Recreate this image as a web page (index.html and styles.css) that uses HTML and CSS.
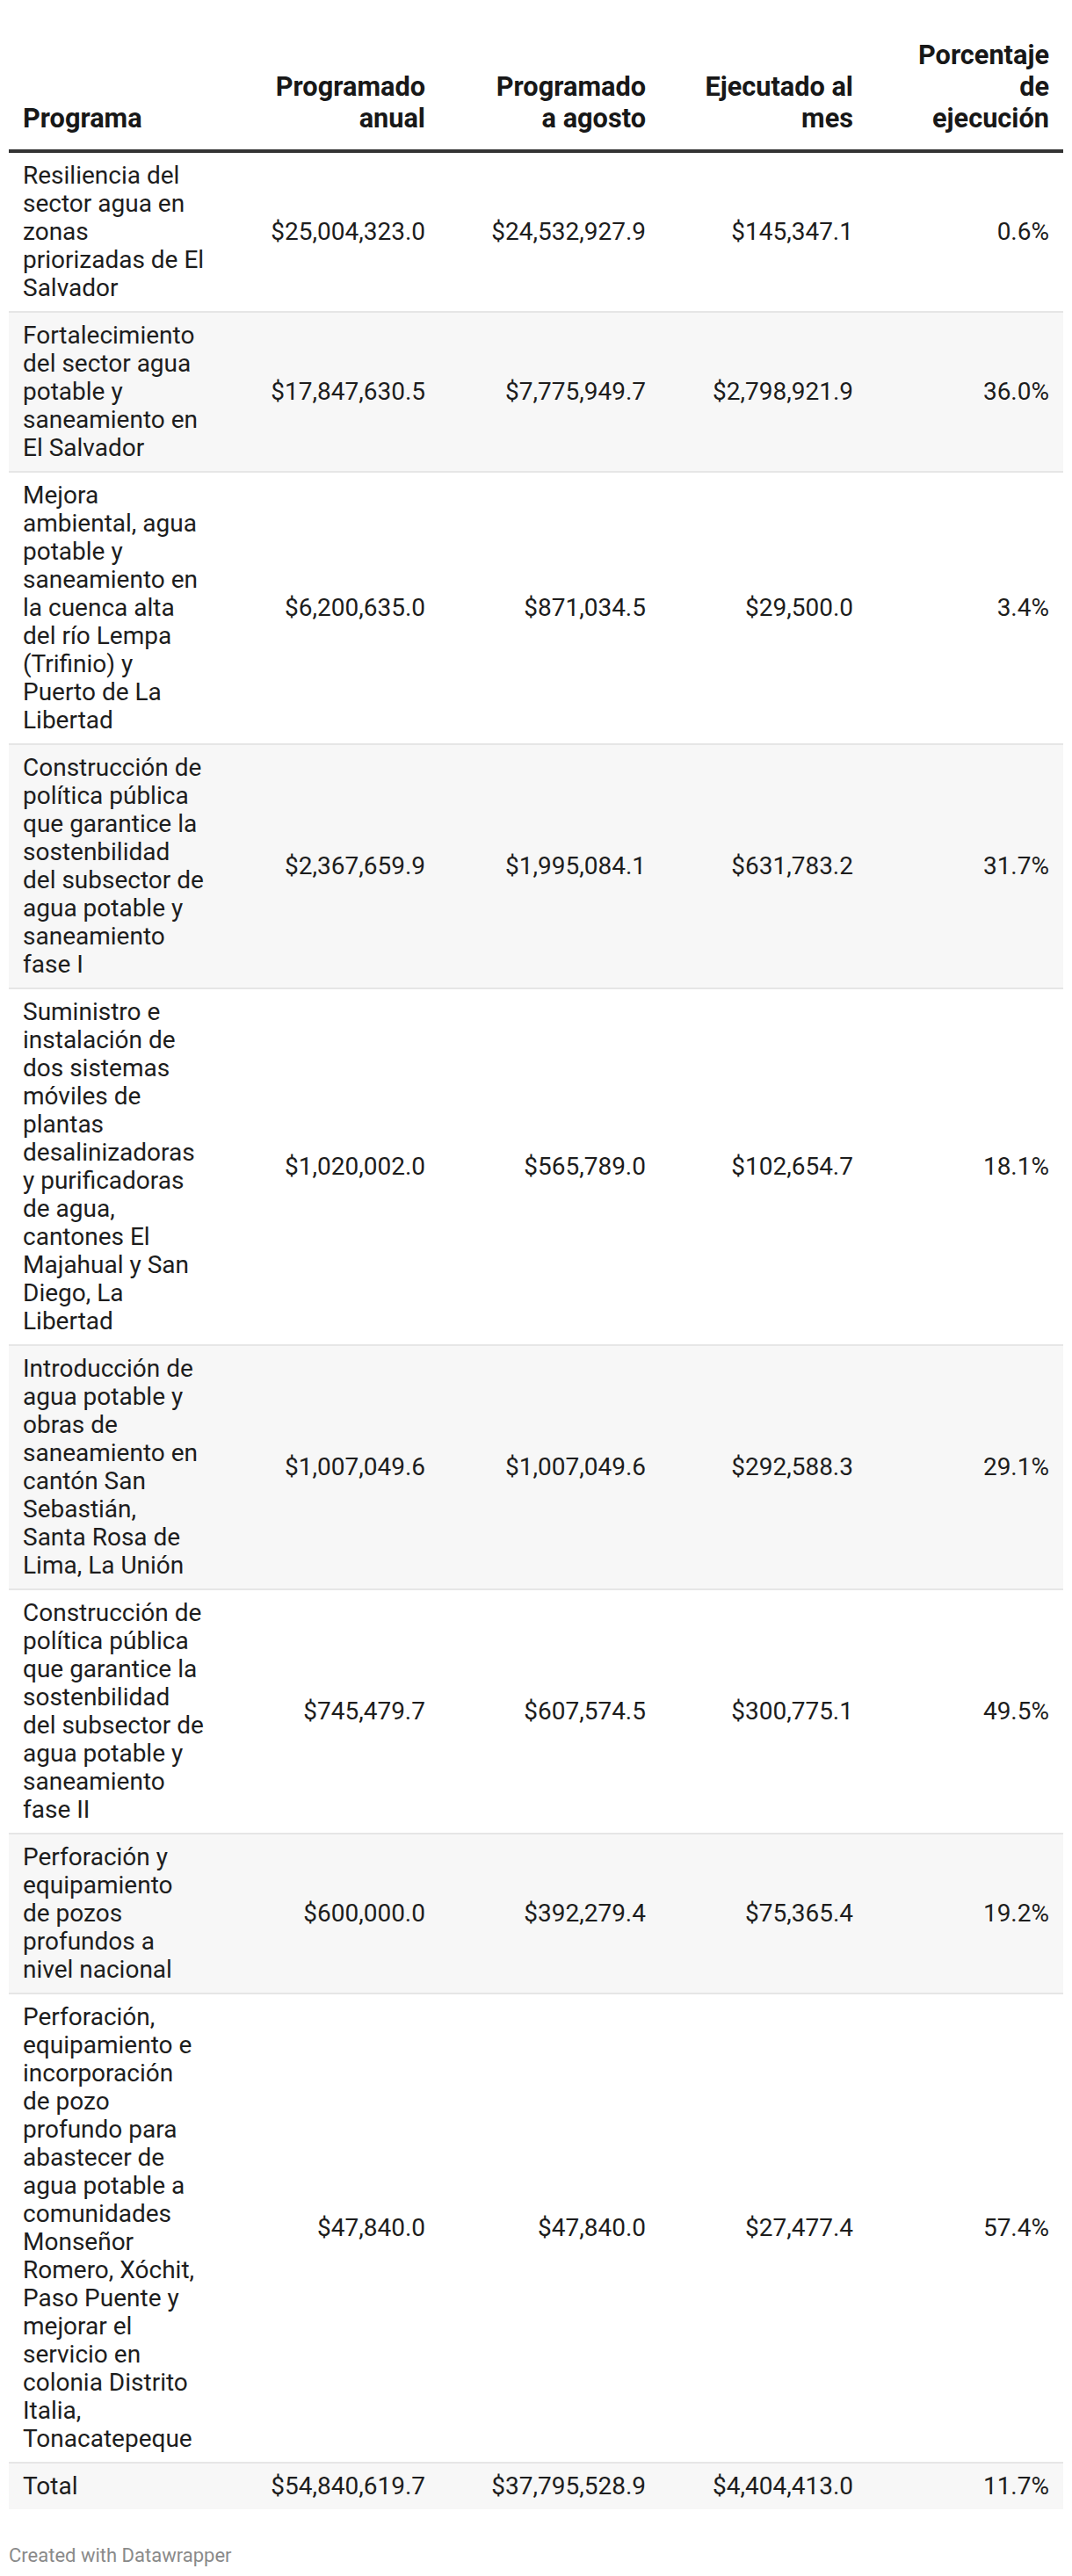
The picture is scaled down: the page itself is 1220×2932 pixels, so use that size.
FILE: index.html
```html
<!DOCTYPE html>
<html lang="es">
<head>
<meta charset="utf-8">
<title>Programas</title>
<link rel="stylesheet" href="styles.css">
</head>
<body>
<div class="chart">
  <table class="dw-table">
    <colgroup>
      <col class="c-name">
      <col class="c-anual">
      <col class="c-agosto">
      <col class="c-mes">
      <col class="c-pct">
    </colgroup>
    <thead>
      <tr>
        <th class="left">Programa</th>
        <th>Programado anual</th>
        <th>Programado a agosto</th>
        <th>Ejecutado al mes</th>
        <th>Porcentaje de ejecución</th>
      </tr>
    </thead>
    <tbody>
      <tr>
        <td class="left">Resiliencia del sector agua en zonas priorizadas de El Salvador</td>
        <td>$25,004,323.0</td><td>$24,532,927.9</td><td>$145,347.1</td><td>0.6%</td>
      </tr>
      <tr class="alt">
        <td class="left">Fortalecimiento del sector agua potable y saneamiento en El Salvador</td>
        <td>$17,847,630.5</td><td>$7,775,949.7</td><td>$2,798,921.9</td><td>36.0%</td>
      </tr>
      <tr>
        <td class="left">Mejora ambiental, agua potable y saneamiento en la cuenca alta del río Lempa (Trifinio) y Puerto de La Libertad</td>
        <td>$6,200,635.0</td><td>$871,034.5</td><td>$29,500.0</td><td>3.4%</td>
      </tr>
      <tr class="alt">
        <td class="left">Construcción de política pública que garantice la sostenbilidad del subsector de agua potable y saneamiento fase I</td>
        <td>$2,367,659.9</td><td>$1,995,084.1</td><td>$631,783.2</td><td>31.7%</td>
      </tr>
      <tr>
        <td class="left">Suministro e instalación de dos sistemas móviles de plantas desalinizadoras y purificadoras de agua, cantones El Majahual y San Diego, La Libertad</td>
        <td>$1,020,002.0</td><td>$565,789.0</td><td>$102,654.7</td><td>18.1%</td>
      </tr>
      <tr class="alt">
        <td class="left">Introducción de agua potable y obras de saneamiento en cantón San Sebastián, Santa Rosa de Lima, La Unión</td>
        <td>$1,007,049.6</td><td>$1,007,049.6</td><td>$292,588.3</td><td>29.1%</td>
      </tr>
      <tr>
        <td class="left">Construcción de política pública que garantice la sostenbilidad del subsector de agua potable y saneamiento fase II</td>
        <td>$745,479.7</td><td>$607,574.5</td><td>$300,775.1</td><td>49.5%</td>
      </tr>
      <tr class="alt">
        <td class="left">Perforación y equipamiento de pozos profundos a nivel nacional</td>
        <td>$600,000.0</td><td>$392,279.4</td><td>$75,365.4</td><td>19.2%</td>
      </tr>
      <tr>
        <td class="left">Perforación, equipamiento e incorporación de pozo profundo para abastecer de agua potable a comunidades Monseñor Romero, Xóchit, Paso Puente y mejorar el servicio en colonia Distrito Italia, Tonacatepeque</td>
        <td>$47,840.0</td><td>$47,840.0</td><td>$27,477.4</td><td>57.4%</td>
      </tr>
    </tbody>
    <tfoot>
      <tr class="alt">
        <td class="left">Total</td>
        <td>$54,840,619.7</td><td>$37,795,528.9</td><td>$4,404,413.0</td><td>11.7%</td>
      </tr>
    </tfoot>
  </table>
  <div class="footer">Created with Datawrapper</div>
</div>
</body>
</html>
```

FILE: styles.css
```css
html, body {
  margin: 0;
  padding: 0;
  background: #ffffff;
}

.chart {
  padding: 45px 10px 0;
  font-family: Roboto, "Liberation Sans", sans-serif;
  color: #1d1d1d;
}

.dw-table {
  width: 1200px;
  table-layout: fixed;
  border-collapse: collapse;
  border-spacing: 0;
}

.c-name { width: 239px; }
.c-anual { width: 251px; }
.c-agosto { width: 251px; }
.c-mes { width: 236px; }
.c-pct { width: 223px; }

.dw-table th {
  font-weight: 700;
  font-size: 30.7px;
  line-height: 36px;
  text-align: right;
  vertical-align: bottom;
  padding: 0 16px 17px 44px;
  border-bottom: 4px solid #333333;
  color: #181818;
}

.dw-table th.left {
  padding-left: 16px;
}

.dw-table td {
  font-size: 28px;
  line-height: 32px;
  text-align: right;
  vertical-align: middle;
  padding: 10px 16px;
  border-bottom: 2px solid #e6e6e6;
}

.dw-table tfoot td {
  border-bottom: none;
}

.dw-table .left {
  text-align: left;
}

.dw-table tr.alt td {
  background: #f7f7f7;
}

.footer {
  margin-top: 39px;
  font-size: 22px;
  line-height: 28px;
  color: #8a8a8a;
}
```
